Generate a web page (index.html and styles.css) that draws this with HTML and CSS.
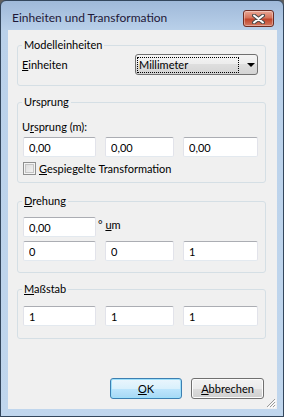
FILE: index.html
```html
<html>
<head>
    <title>Einheiten und Transformation</title>
    <link rel="stylesheet" href="styles.css">
</head>
<body>
<div class="window">
    <div class="titlebar">
        <span class="title">Einheiten und Transformation</span>
        <span class="close">
            <svg width="13" height="10" viewBox="0 0 13 10">
                <path d="M2 1.5 L11 8.5 M11 1.5 L2 8.5" stroke="#4a4a4a" stroke-width="4" stroke-linecap="round"/>
                <path d="M2 1.5 L11 8.5 M11 1.5 L2 8.5" stroke="#ffffff" stroke-width="2" stroke-linecap="round"/>
            </svg>
        </span>
    </div>

    <div class="client">
        <fieldset class="group" id="units">
            <legend>Modelleinheiten</legend>
            <div class="units-row">
                <span class="units-label"><u>E</u>inheiten</span>
                <div class="combo">
                    <span class="combo-text">Millimeter</span>
                    <span class="combo-arrow"></span>
                </div>
            </div>
        </fieldset>

        <fieldset class="group" id="origin">
            <legend>Ursprung</legend>
            <div class="group-body">
                <div class="caption">U<u>r</u>sprung (m):</div>
                <div class="fields">
                    <input class="field" value="0,00">
                    <input class="field" value="0,00">
                    <input class="field" value="0,00">
                </div>
                <div class="check-row">
                    <span class="checkbox"></span>
                    <span><u>G</u>espiegelte Transformation</span>
                </div>
            </div>
        </fieldset>

        <fieldset class="group" id="rotation">
            <legend><u>D</u>rehung</legend>
            <div class="group-body">
                <div class="angle-row">
                    <input class="field angle" value="0,00">
                    <span class="angle-unit">° <u>u</u>m</span>
                </div>
                <div class="fields">
                    <input class="field" value="0">
                    <input class="field" value="0">
                    <input class="field" value="1">
                </div>
            </div>
        </fieldset>

        <fieldset class="group" id="scale">
            <legend><u>M</u>aßstab</legend>
            <div class="group-body">
                <div class="fields">
                    <input class="field" value="1">
                    <input class="field" value="1">
                    <input class="field" value="1">
                </div>
            </div>
        </fieldset>

        <div class="buttons">
            <div class="button default"><u>O</u>K</div>
            <div class="button"><u>A</u>bbrechen</div>
        </div>

        <svg class="grip" width="12" height="12" viewBox="0 0 12 12">
            <path d="M11 3 L3 11 M11 6 L6 11 M11 9 L9 11" stroke="#9a9a9a" stroke-width="1"/>
            <path d="M12 4 L4 12 M12 7 L7 12 M12 10 L10 12" stroke="#ffffff" stroke-width="1"/>
        </svg>
    </div>
</div>
</body>
</html>
```

FILE: styles.css
```css
body {
    margin: 0;
    background-color: #5f5f5f;
    font-family: Lato, "Open Sans", sans-serif;
    font-size: 11px;
    color: #000;
}

.window {
    box-sizing: border-box;
    width: 284px;
    height: 417px;
    border: 1px solid #33465c;
    border-radius: 6px 6px 0 0;
    background: linear-gradient(#9fb9d9, #bad1ea 30px, #c0d6ed);
    padding: 0 6px 7px 7px;
    display: flex;
    flex-direction: column;
}

.titlebar {
    height: 29px;
    flex: none;
    display: flex;
    align-items: flex-start;
    justify-content: space-between;
}

.title {
    margin-top: 9px;
    padding-left: 4px;
    line-height: 16px;
    font-size: 12px;
    color: #1e1838;
}

.close {
    box-sizing: border-box;
    width: 31px;
    height: 17px;
    margin-top: 9px;
    margin-right: 3px;
    border: 1px solid #6d2c22;
    border-radius: 3px;
    background: linear-gradient(#e9a896, #d6735a 45%, #c0452b 55%, #d47a62);
    box-shadow: inset 0 0 0 1px rgba(255, 255, 255, .35);
    display: flex;
    align-items: center;
    justify-content: center;
}

.client {
    flex: 1;
    background-color: #f0f0f0;
    position: relative;
    display: flex;
    flex-direction: column;
    padding: 0 11px 10px 9px;
}

.group {
    margin: 0;
    padding: 0;
    min-width: 0;
    border: 1px solid #d5dfe5;
    border-radius: 3px;
}

.group legend {
    margin-left: 4px;
    padding: 0 2px;
    line-height: 14px;
    color: #000;
}

#units { margin-top: 8px; }
#origin { margin-top: 9px; }
#rotation { margin-top: 11px; }
#scale { margin-top: 9px; }

.units-row {
    display: flex;
    align-items: center;
    padding: 2px 0 10px 4px;
}

.units-label {
    width: 113px;
}

.combo {
    box-sizing: border-box;
    width: 123px;
    height: 21px;
    border: 1px solid #707070;
    border-radius: 3px;
    background: linear-gradient(#f4f4f4, #ececec 50%, #dedede 50%, #d4d4d4);
    display: flex;
    align-items: center;
    padding: 0 2px 0 1px;
}

.combo-text {
    box-sizing: border-box;
    width: 102px;
    height: 16px;
    line-height: 14px;
    border: 1px dotted #000;
    padding-left: 1px;
}

.combo-arrow {
    margin-left: 8px;
    width: 0;
    height: 0;
    border-left: 4px solid transparent;
    border-right: 4px solid transparent;
    border-top: 4px solid #000;
}

.group-body {
    padding: 10px 0 6px 5px;
}

#rotation .group-body {
    padding: 9px 0 11px 5px;
}

#scale .group-body {
    padding: 10px 0 12px 5px;
}

.caption {
    line-height: 15px;
    margin-left: -1px;
}

.fields {
    display: grid;
    grid-template-columns: 73px 69px 75px;
    column-gap: 9px;
    margin-top: 3px;
}

#rotation .fields {
    margin-top: 4px;
}

#scale .fields {
    margin-top: 0;
}

.field {
    box-sizing: border-box;
    width: 100%;
    height: 20px;
    margin: 0;
    padding: 0 0 0 5px;
    font-family: Lato, "Open Sans", sans-serif;
    font-size: 11px;
    color: #000;
    background-color: #fff;
    border: 1px solid #e2e3ea;
    border-top-color: #abadb3;
    border-bottom-color: #e3e9ef;
    border-radius: 2px;
    outline: none;
}

.angle-row {
    display: flex;
    align-items: flex-start;
}

.angle {
    width: 73px;
}

.angle-unit {
    margin-left: 2px;
    line-height: 15px;
}

.check-row {
    display: flex;
    align-items: center;
    margin-top: 4px;
    line-height: 15px;
}

.checkbox {
    box-sizing: border-box;
    width: 13px;
    height: 13px;
    margin-right: 3px;
    border: 1px solid #8e8f8f;
    background: linear-gradient(135deg, #d8d8d8, #f6f6f6);
    box-shadow: inset 0 0 0 1px #f4f4f4, inset 0 0 0 2px #c4c4c4;
}

.buttons {
    margin-top: auto;
    display: flex;
    justify-content: flex-end;
    gap: 9px;
    margin-right: 2px;
}

.button {
    box-sizing: border-box;
    width: 73px;
    height: 21px;
    line-height: 19px;
    text-align: center;
    border: 1px solid #707070;
    border-radius: 3px;
    background: linear-gradient(#f2f2f2, #ebebeb 50%, #dddddd 50%, #cfcfcf);
    box-shadow: inset 0 0 0 1px #fcfcfc;
}

.button.default {
    width: 72px;
    border-color: #3c7fb1;
    background: linear-gradient(#eaf6fd, #d9f0fc 50%, #bee6fd 50%, #a7d9f5);
    box-shadow: inset 0 0 0 1px #9ee0fb;
}

.grip {
    position: absolute;
    right: 1px;
    bottom: 1px;
}
```
